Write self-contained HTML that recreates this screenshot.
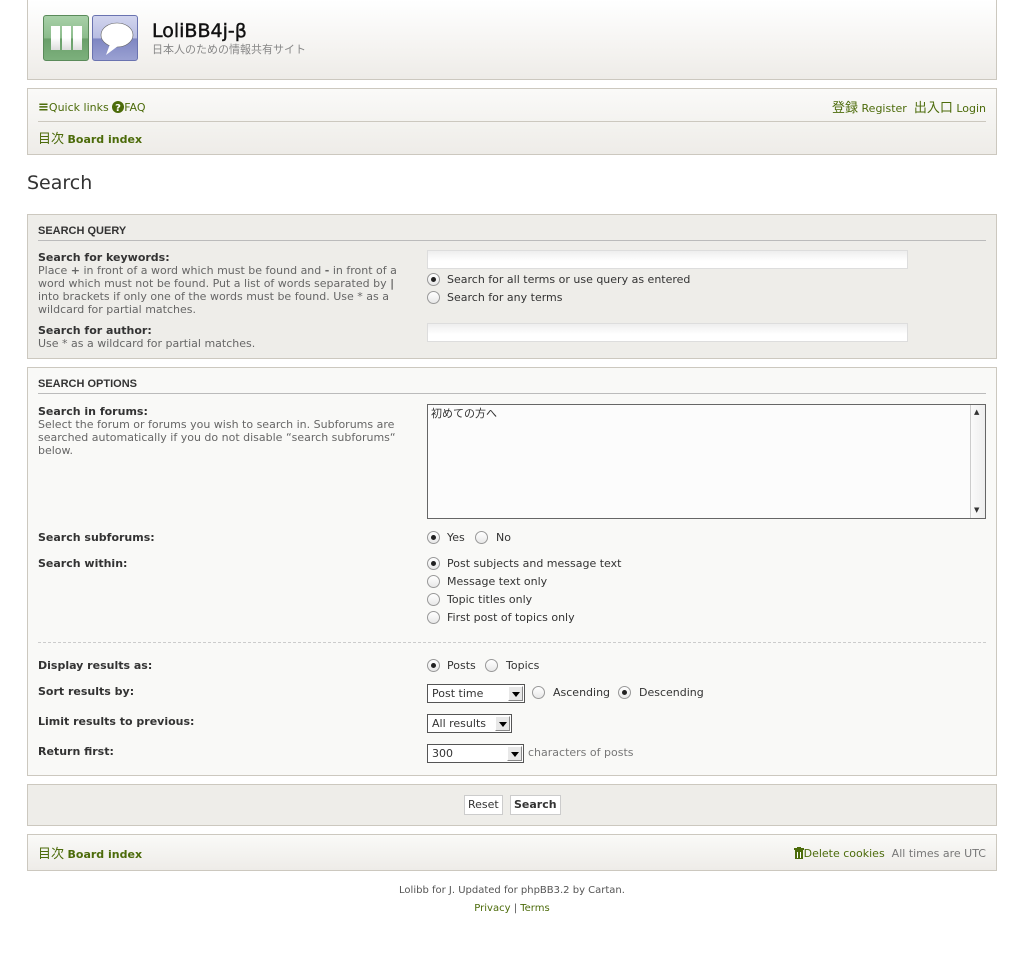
<!DOCTYPE html>
<html><head><meta charset="utf-8"><style>
*{box-sizing:border-box;margin:0;padding:0}
body{width:1024px;height:954px;background:#fff;font-family:"DejaVu Sans","Noto Sans CJK JP",sans-serif;font-size:11px;color:#333;position:relative;overflow:hidden}
.a{position:absolute;white-space:nowrap;line-height:13px}
.p{position:absolute;border:1px solid #ccc8bf}
.g{color:#4c6b0a}
.b{font-weight:bold}
.gr{color:#666}
.r{position:absolute;width:13px;height:13px;border:1px solid #999;border-radius:50%;background:linear-gradient(#fff,#e8e8e8)}
.r.on::after{content:"";position:absolute;left:3px;top:3px;width:5px;height:5px;border-radius:50%;background:#222}
.in{position:absolute;height:19px;border:1px solid #ddd;background:linear-gradient(#eee,#fff 60%)}
.sel{position:absolute;height:19px;border:1px solid #555;background:#fff;font-size:11px;padding:3px 4px;line-height:12px}
.sel i{position:absolute;right:1px;top:1px;width:15px;height:15px;background:#e8e8e8;border:1px solid #888;border-top-color:#fff;border-left-color:#fff}
.sel i::after{content:"";position:absolute;left:3px;top:5px;border:4px solid transparent;border-top:5px solid #000;border-bottom:0}
.hd{position:absolute;font-family:"Liberation Sans",sans-serif;font-weight:bold;font-size:11px}
.btn{position:absolute;height:20px;border:1px solid #ccc;background:#fff;padding:3px 3px;line-height:12px}
.cjk{font-size:13px;font-family:"Noto Sans CJK JP",sans-serif}
</style></head><body>
<div class="p" style="left:27px;top:-1px;width:970px;height:81px;background:linear-gradient(#fff,#eeece8)"></div>
<div style="position:absolute;left:43px;top:15px;width:46px;height:46px;border:1px solid #5a8a5a;border-radius:3px;background:linear-gradient(#a8d0a8,#8cbc8c 50%,#6a9f6a 52%,#7cb07c)">
<div style="position:absolute;left:7px;top:10px;width:9px;height:24px;background:linear-gradient(#fff,#fff 50%,#ddd)"></div>
<div style="position:absolute;left:18px;top:10px;width:9px;height:24px;background:linear-gradient(#fff,#fff 50%,#ddd)"></div>
<div style="position:absolute;left:29px;top:10px;width:9px;height:24px;background:linear-gradient(#fff,#fff 50%,#ddd)"></div></div>
<div style="position:absolute;left:92px;top:15px;width:46px;height:46px;border:1px solid #6a73b0;border-radius:3px;background:linear-gradient(#d2d5ee,#b8bde2 50%,#7e86c2 52%,#9aa1d2)">
<svg width="46" height="46" style="position:absolute;left:0;top:0"><ellipse cx="24" cy="19" rx="16" ry="12" fill="#fff" stroke="#666" stroke-width="0.6"/><path d="M17 28 L13 39 L25 30Z" fill="#fff"/></svg></div>
<div class="a" style="left:152px;top:19px;font-size:19px;line-height:24px;color:#111;-webkit-text-stroke:0.4px #111">LoliBB4j-β</div>
<div class="a" style="left:152px;top:43px;font-size:11px;color:#888;font-family:'Noto Sans CJK JP',sans-serif">日本人のための情報共有サイト</div>

<div class="p" style="left:27px;top:88px;width:970px;height:67px;background:linear-gradient(#fafaf8,#eeece8)"></div>
<div style="position:absolute;left:38px;top:121px;width:948px;height:1px;background:#ccc8bf"></div>
<div class="a g" style="left:38px;top:101px"><b style="font-size:13px">≡</b>Quick links <svg width="12" height="12" style="vertical-align:-2px"><circle cx="6" cy="6" r="6" fill="#4c6b0a"/><text x="6" y="10" font-size="10" font-weight="bold" fill="#fff" text-anchor="middle" font-family="DejaVu Sans">?</text></svg>FAQ</div>
<div class="a g" style="left:800px;top:100px;width:186px;text-align:right"><span class="cjk">登録</span> Register &nbsp;<span class="cjk">出入口</span> Login</div>
<div class="a g" style="left:38px;top:131px"><span class="cjk">目次</span> <b>Board index</b></div>

<div class="a" style="left:27px;top:172px;font-size:19px;line-height:22px;color:#333">Search</div>

<div class="p" style="left:27px;top:214px;width:970px;height:145px;background:#eeede9"></div>
<div class="hd" style="left:38px;top:225px">SEARCH QUERY</div>
<div style="position:absolute;left:38px;top:240px;width:948px;height:1px;background:#bbb"></div>
<div class="a b" style="left:38px;top:251px">Search for keywords:</div>
<div class="a gr" style="left:38px;top:264px;line-height:13px">Place <b>+</b> in front of a word which must be found and <b>-</b> in front of a<br>word which must not be found. Put a list of words separated by <b>|</b><br>into brackets if only one of the words must be found. Use * as a<br>wildcard for partial matches.</div>
<div class="in" style="left:427px;top:250px;width:481px"></div>
<div class="r on" style="left:427px;top:273px"></div><div class="a" style="left:447px;top:273px">Search for all terms or use query as entered</div>
<div class="r" style="left:427px;top:291px"></div><div class="a" style="left:447px;top:291px">Search for any terms</div>
<div class="a b" style="left:38px;top:324px">Search for author:</div>
<div class="a gr" style="left:38px;top:337px">Use * as a wildcard for partial matches.</div>
<div class="in" style="left:427px;top:323px;width:481px"></div>

<div class="p" style="left:27px;top:367px;width:970px;height:409px;background:#f9f9f7"></div>
<div class="hd" style="left:38px;top:378px">SEARCH OPTIONS</div>
<div style="position:absolute;left:38px;top:393px;width:948px;height:1px;background:#bbb"></div>
<div class="a b" style="left:38px;top:405px">Search in forums:</div>
<div class="a gr" style="left:38px;top:418px">Select the forum or forums you wish to search in. Subforums are<br>searched automatically if you do not disable “search subforums“<br>below.</div>
<div style="position:absolute;left:427px;top:404px;width:559px;height:115px;border:1px solid #666;background:#fcfcfc">
<div class="a" style="left:3px;top:2px">初めての方へ</div>
<div style="position:absolute;right:0;top:0;width:15px;height:113px;border-left:1px solid #ccc;background:linear-gradient(90deg,#fafafa,#eee)"><div class="a" style="left:3px;top:1px;font-size:7px">▲</div><div class="a" style="left:3px;bottom:1px;font-size:7px">▼</div></div></div>
<div class="a b" style="left:38px;top:531px">Search subforums:</div>
<div class="r on" style="left:427px;top:531px"></div><div class="a" style="left:447px;top:531px">Yes</div>
<div class="r" style="left:475px;top:531px"></div><div class="a" style="left:496px;top:531px">No</div>
<div class="a b" style="left:38px;top:557px">Search within:</div>
<div class="r on" style="left:427px;top:557px"></div><div class="a" style="left:447px;top:557px">Post subjects and message text</div>
<div class="r" style="left:427px;top:575px"></div><div class="a" style="left:447px;top:575px">Message text only</div>
<div class="r" style="left:427px;top:593px"></div><div class="a" style="left:447px;top:593px">Topic titles only</div>
<div class="r" style="left:427px;top:611px"></div><div class="a" style="left:447px;top:611px">First post of topics only</div>
<div style="position:absolute;left:38px;top:642px;width:948px;border-top:1px dashed #ccc"></div>
<div class="a b" style="left:38px;top:659px">Display results as:</div>
<div class="r on" style="left:427px;top:659px"></div><div class="a" style="left:447px;top:659px">Posts</div>
<div class="r" style="left:485px;top:659px"></div><div class="a" style="left:506px;top:659px">Topics</div>
<div class="a b" style="left:38px;top:685px">Sort results by:</div>
<div class="sel" style="left:427px;top:684px;width:98px">Post time<i></i></div>
<div class="r" style="left:532px;top:686px"></div><div class="a" style="left:553px;top:686px">Ascending</div>
<div class="r on" style="left:618px;top:686px"></div><div class="a" style="left:639px;top:686px">Descending</div>
<div class="a b" style="left:38px;top:715px">Limit results to previous:</div>
<div class="sel" style="left:427px;top:714px;width:85px">All results<i></i></div>
<div class="a b" style="left:38px;top:745px">Return first:</div>
<div class="sel" style="left:427px;top:744px;width:97px">300<i></i></div>
<div class="a gr" style="left:528px;top:746px;color:#777">characters of posts</div>

<div class="p" style="left:27px;top:784px;width:970px;height:42px;background:#eeede9"></div>
<div class="btn" style="left:464px;top:795px">Reset</div>
<div class="btn b" style="left:510px;top:795px">Search</div>

<div class="p" style="left:27px;top:834px;width:970px;height:37px;background:linear-gradient(#fafaf8,#eeece8)"></div>
<div class="a g" style="left:38px;top:846px"><span class="cjk">目次</span> <b>Board index</b></div>
<div class="a" style="left:760px;width:226px;text-align:right;top:847px"><span class="g"><svg width="10" height="12" style="vertical-align:-2px"><rect x="0" y="1" width="10" height="2" fill="#4c6b0a"/><rect x="3" y="0" width="4" height="2" fill="#4c6b0a"/><rect x="1" y="3" width="8" height="9" fill="#4c6b0a"/><rect x="3" y="5" width="1" height="6" fill="#fff"/><rect x="6" y="5" width="1" height="6" fill="#fff"/></svg>Delete cookies</span> <span style="color:#777">&nbsp;All times are UTC</span></div>

<div class="a" style="left:0;width:1024px;text-align:center;top:884px;font-size:10px;color:#555">Lolibb for J. Updated for phpBB3.2 by Cartan.</div>
<div class="a" style="left:0;width:1024px;text-align:center;top:902px;font-size:10px;color:#555"><span class="g">Privacy</span> | <span class="g">Terms</span></div>
</body></html>
